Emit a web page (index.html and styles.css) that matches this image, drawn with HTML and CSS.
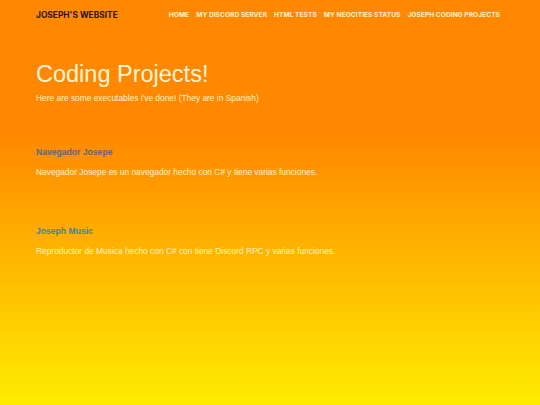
FILE: index.html
```html
<!DOCTYPE html>
<html>
<head>
<meta charset="utf-8">
<link rel="stylesheet" href="styles.css">
</head>
<body>
<div class="page">
  <header class="topbar">
    <div class="brand">JOSEPH'S WEBSITE</div>
    <nav class="nav">
      <a href="#">HOME</a>
      <a href="#">MY DISCORD SERVER</a>
      <a href="#">HTML TESTS</a>
      <a href="#">MY NEOCITIES STATUS</a>
      <a href="#">JOSEPH CODING PROJECTS</a>
    </nav>
  </header>
  <section class="hero">
    <h1 class="title">Coding Projects!</h1>
    <p class="subtitle">Here are some executables i've done! (They are in Spanish)</p>
  </section>
  <section class="project first">
    <h2 class="project-name">Navegador Josepe</h2>
    <p class="project-desc">Navegador Josepe es un navegador hecho con C# y tiene varias funciones.</p>
  </section>
  <section class="project second">
    <h2 class="project-name">Joseph Music</h2>
    <p class="project-desc">Reproductor de Musica hecho con C# con tiene Discord RPC y varias funciones.</p>
  </section>
</div>
</body>
</html>
```

FILE: styles.css
```css
html, body {
  margin: 0;
  padding: 0;
  height: 100%;
}
body {
  background: linear-gradient(180deg, #ff8800 0%, #ff8800 33%, #ffec00 100%);
  font-family: "Liberation Sans", Arial, sans-serif;
  color: #fff4cc;
  min-height: 405px;
}
.page {
  padding: 0 40px 0 36px;
}
.topbar {
  display: flex;
  justify-content: space-between;
  align-items: center;
  height: 30px;
}
.brand {
  font-family: Inter, sans-serif;
  font-weight: 700;
  font-size: 8.4px;
  color: #2a1400;
}
.nav {
  display: flex;
  gap: 7px;
}
.nav a {
  font-family: Inter, sans-serif;
  font-weight: 700;
  font-size: 6.7px;
  color: #fff0d6;
  text-decoration: none;
}
.hero {
  padding-top: 30px;
}
.title {
  margin: 0;
  font-size: 23.5px;
  font-weight: 400;
  line-height: 29px;
  color: #fff6d6;
}
.subtitle {
  margin: 3px 0 0;
  font-size: 8.4px;
  line-height: 12px;
}
.project {
  padding-top: 42px;
}
.project.second {
  padding-top: 47px;
}
.project-name {
  margin: 0;
  font-size: 8.6px;
  font-weight: 700;
  line-height: 12px;
  color: #55698a;
}
.project.second .project-name {
  color: #3f7fae;
}
.project-desc {
  margin: 8px 0 0;
  font-size: 8.4px;
  line-height: 12px;
}
```
